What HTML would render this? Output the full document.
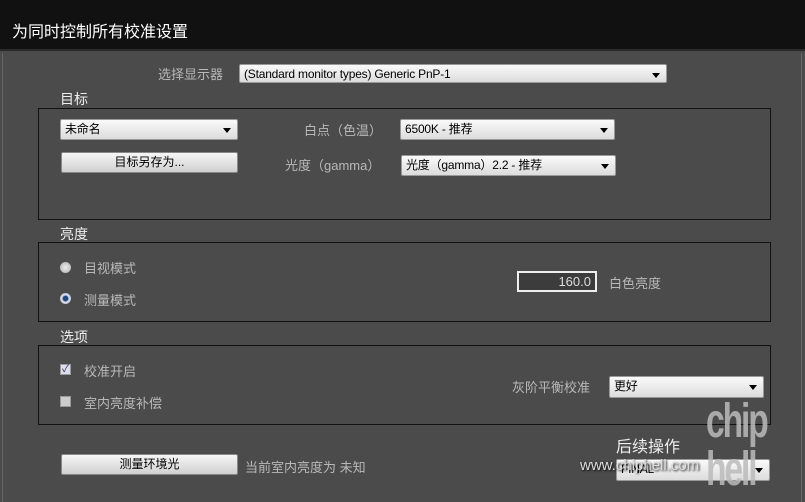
<!DOCTYPE html><html><head><meta charset="utf-8"><style>
*{margin:0;padding:0;box-sizing:border-box}
body{width:805px;height:502px;background:#4b4b4b;position:relative;overflow:hidden;font-family:"Liberation Sans","Noto Sans CJK SC",sans-serif;color:#c8c8c8;font-size:13px}
.a{position:absolute;white-space:nowrap}
.t{position:absolute;left:0;top:0;width:805px;height:51px;background:#111;border-bottom:2px solid #2a2a2a;color:#fff;font-size:16px;padding:18px 0 0 12px}
.box{position:absolute;border:1px solid #111}
.h{font-size:14px;color:#eee}
.dd{position:absolute;background:linear-gradient(#fafafa,#dcdcdc);border:1px solid #999;border-radius:2px;color:#000;font-size:12px;padding:2px 4px;line-height:15px;letter-spacing:-0.2px}
.dd:after{content:"";position:absolute;right:6px;top:8px;border:4px solid transparent;border-top:5px solid #000;border-bottom:0}
.btn{position:absolute;background:linear-gradient(#f6f6f6,#d0d0d0);border:1px solid #888;border-radius:2px;color:#000;font-size:12px;text-align:center;line-height:18px}
.lbl{color:#b8b8b8;font-size:13px}
</style></head><body>
<div class="t">为同时控制所有校准设置</div>
<div class="a" style="left:2px;top:53px;width:800px;height:449px;border-left:1px solid #666;border-right:1px solid #666"></div>
<div class="a lbl" style="left:158px;top:64px">选择显示器</div>
<div class="dd" style="left:239px;top:64px;width:428px;height:19px">(Standard monitor types) Generic PnP-1</div>
<div class="a h" style="left:60px;top:89px">目标</div>
<div class="box" style="left:38px;top:108px;width:733px;height:112px"></div>
<div class="dd" style="left:60px;top:119px;width:178px;height:21px">未命名</div>
<div class="btn" style="left:61px;top:152px;width:177px;height:21px">目标另存为...</div>
<div class="a lbl" style="left:304px;top:120px">白点（色温）</div>
<div class="dd" style="left:400px;top:119px;width:215px;height:21px">6500K - 推荐</div>
<div class="a lbl" style="left:285px;top:155px">光度（gamma）</div>
<div class="dd" style="left:401px;top:155px;width:215px;height:21px">光度（gamma）2.2 - 推荐</div>
<div class="a h" style="left:60px;top:224px">亮度</div>
<div class="box" style="left:38px;top:242px;width:733px;height:80px"></div>
<div class="a" style="left:60px;top:262px;width:11px;height:11px;border-radius:50%;background:radial-gradient(#eee,#aaa)"></div>
<div class="a lbl" style="left:84px;top:258px">目视模式</div>
<div class="a" style="left:60px;top:293px;width:11px;height:11px;border-radius:50%;background:radial-gradient(#1a4a7a 30%,#dde 45%,#aab)"></div>
<div class="a lbl" style="left:84px;top:290px">测量模式</div>
<div class="a" style="left:517px;top:271px;width:80px;height:21px;border:2px solid #eee;background:#3c3c3c;color:#ddd;text-align:right;padding-right:4px;line-height:17px;font-size:13px">160.0</div>
<div class="a lbl" style="left:609px;top:273px">白色亮度</div>
<div class="a h" style="left:60px;top:327px">选项</div>
<div class="box" style="left:38px;top:345px;width:733px;height:80px"></div>
<div class="a" style="left:60px;top:364px;width:11px;height:11px;background:#dde;border:1px solid #999;color:#234;font-size:10px;line-height:9px;text-align:center">✓</div>
<div class="a lbl" style="left:84px;top:361px">校准开启</div>
<div class="a" style="left:60px;top:396px;width:11px;height:11px;background:#ccc;border:1px solid #999"></div>
<div class="a lbl" style="left:84px;top:393px">室内亮度补偿</div>
<div class="a lbl" style="left:512px;top:377px">灰阶平衡校准</div>
<div class="dd" style="left:609px;top:376px;width:155px;height:22px">更好</div>
<div class="btn" style="left:61px;top:454px;width:177px;height:21px">测量环境光</div>
<div class="a lbl" style="left:245px;top:457px">当前室内亮度为 未知</div>
<div class="a" style="left:616px;top:433px;font-size:16px;color:#eee">后续操作</div>
<div class="dd" style="left:616px;top:459px;width:154px;height:22px">FINAL</div>
<div class="a" style="left:580px;top:457px;font-size:15px;color:#ddd;text-shadow:1px 1px 2px #000">www.chiphell.com</div>
<div class="a" style="left:706px;top:398px;font-size:48px;font-weight:bold;color:#bbb;line-height:48px;letter-spacing:-3px;opacity:.85;transform:scaleX(0.7);transform-origin:left top">chip<br>hell</div>
</body></html>
